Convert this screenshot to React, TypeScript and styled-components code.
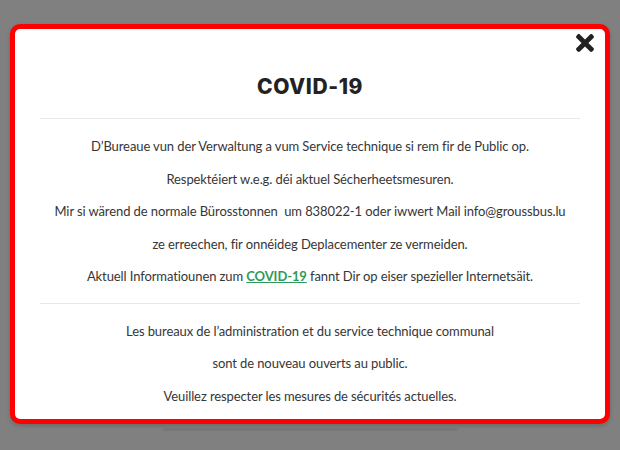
import React from "react";
import styled, { createGlobalStyle } from "styled-components";
import { FaTimes } from "react-icons/fa";

const Global = createGlobalStyle`
  html, body {
    margin: 0;
    padding: 0;
    background: #808080;
  }
  body {
    font-family: "Lato", "Noto Sans", sans-serif;
  }
`;

const Page = styled.div`
  width: 620px;
  height: 450px;
  background: #808080;
  padding-top: 24px;
  box-sizing: border-box;
  display: flex;
  flex-direction: column;
  align-items: center;
  overflow: hidden;
`;

const Modal = styled.div`
  position: relative;
  width: 600px;
  height: 400px;
  box-sizing: border-box;
  background: #ffffff;
  border: 5px solid #ff0000;
  border-radius: 10px;
  box-shadow: 0 2px 4px rgba(0, 0, 0, 0.18);
  padding: 0 25px;
  display: flex;
  flex-direction: column;
`;

const CloseButton = styled.button`
  position: absolute;
  top: 1px;
  right: 7px;
  border: 0;
  background: transparent;
  padding: 0;
  color: #222;
  display: flex;
  cursor: pointer;
`;

const Title = styled.h2`
  margin: 45px 0 18px;
  font-family: "Inter", "Noto Sans", sans-serif;
  font-weight: 800;
  font-size: 21px;
  line-height: 26px;
  letter-spacing: 0.6px;
  color: #222;
  text-align: center;
`;

const Divider = styled.hr`
  margin: 0;
  border: 0;
  height: 1px;
  background: #e8e8e8;
`;

const Section = styled.div<{ $bottom: number }>`
  display: flex;
  flex-direction: column;
  gap: 13px;
  padding: 18px 0 ${(p) => p.$bottom}px;
`;

const Line = styled.p`
  margin: 0;
  font-family: "Lato", "Noto Sans", sans-serif;
  font-size: 13px;
  line-height: 19.5px;
  letter-spacing: -0.1px;
  color: #363636;
  text-align: center;
  white-space: nowrap;
`;

const Link = styled.a`
  color: #2e9a5a;
  font-weight: 700;
  text-decoration: underline;
`;

const Ghost = styled.div`
  width: 295px;
  height: 3px;
  margin-top: 4px;
  background: rgba(0, 0, 0, 0.07);
  border-radius: 2px;
`;

export default function App() {
  return (
    <>
      <Global />
      <Page>
        <Modal>
          <CloseButton aria-label="close">
            <FaTimes size={26} />
          </CloseButton>
          <Title>COVID-19</Title>
          <Divider />
          <Section $bottom={16}>
            <Line>D’Bureaue vun der Verwaltung a vum Service technique si rem fir de Public op.</Line>
            <Line>Respektéiert w.e.g. déi aktuel Sécherheetsmesuren.</Line>
            <Line>Mir si wärend de normale Bürosstonnen{"\u00a0"} um 838022-1 oder iwwert Mail info@groussbus.lu</Line>
            <Line>ze erreechen, fir onnéideg Deplacementer ze vermeiden.</Line>
            <Line>
              Aktuell Informatiounen zum <Link href="#">COVID-19</Link> fannt Dir op eiser spezieller Internetsäit.
            </Line>
          </Section>
          <Divider />
          <Section $bottom={13}>
            <Line>Les bureaux de l’administration et du service technique communal</Line>
            <Line>sont de nouveau ouverts au public.</Line>
            <Line>Veuillez respecter les mesures de sécurités actuelles.</Line>
          </Section>
        </Modal>
        <Ghost />
      </Page>
    </>
  );
}
